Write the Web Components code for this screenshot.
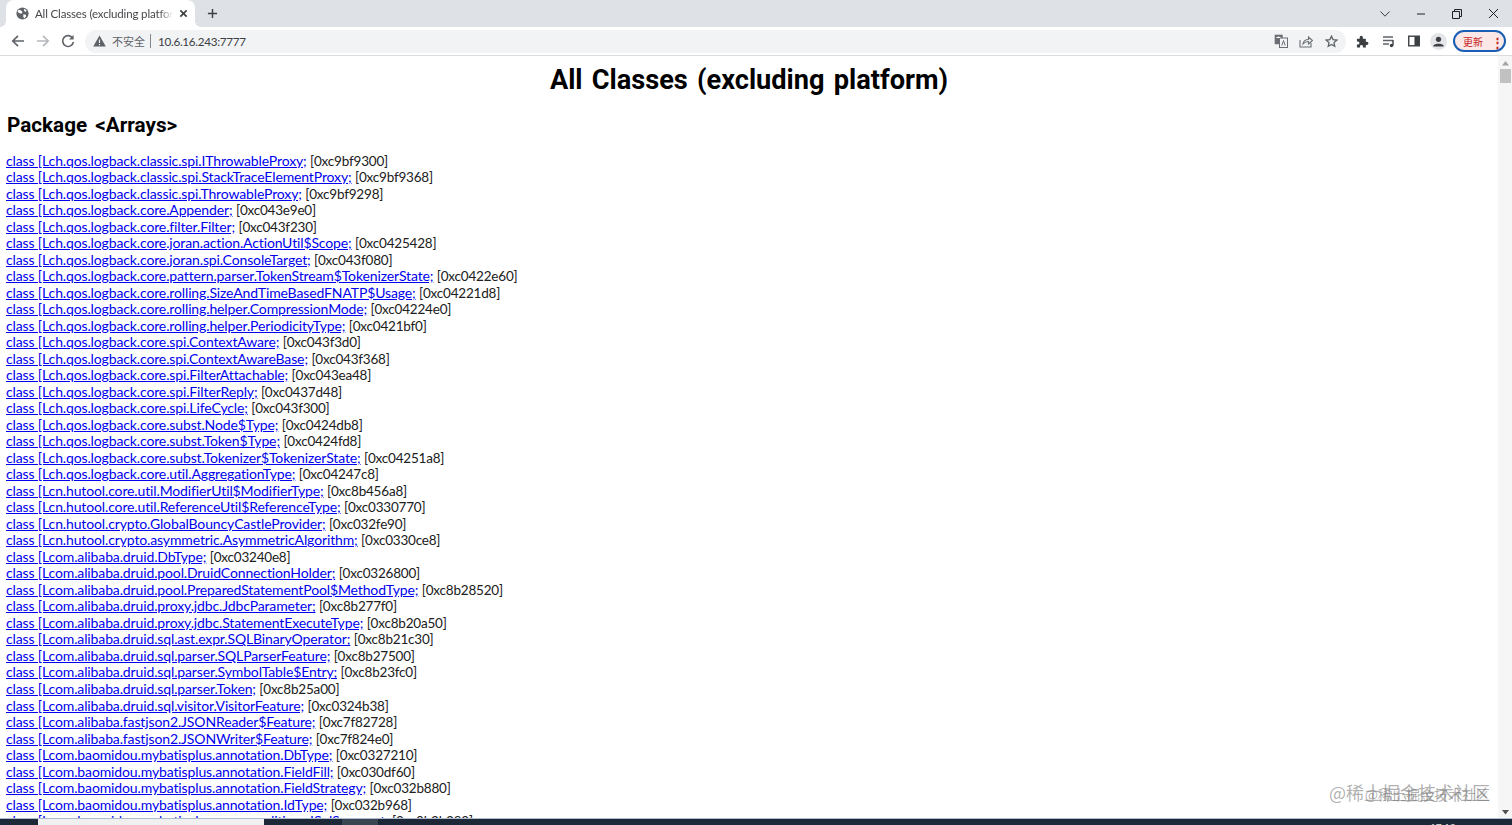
<!DOCTYPE html>
<html>
<head>
<meta charset="utf-8">
<style>
  html, body { margin: 0; height: 100%; overflow: hidden; }
  body { font-family: Lato, "Noto Sans CJK SC", sans-serif; }
</style>
</head>
<body>
<browser-window>
  <class-list title="All Classes (excluding platform)" package="Package <Arrays>"></class-list>
</browser-window>
<script>
const classes = [
  ["[Lch.qos.logback.classic.spi.IThrowableProxy;", "0xc9bf9300"],
  ["[Lch.qos.logback.classic.spi.StackTraceElementProxy;", "0xc9bf9368"],
  ["[Lch.qos.logback.classic.spi.ThrowableProxy;", "0xc9bf9298"],
  ["[Lch.qos.logback.core.Appender;", "0xc043e9e0"],
  ["[Lch.qos.logback.core.filter.Filter;", "0xc043f230"],
  ["[Lch.qos.logback.core.joran.action.ActionUtil$Scope;", "0xc0425428"],
  ["[Lch.qos.logback.core.joran.spi.ConsoleTarget;", "0xc043f080"],
  ["[Lch.qos.logback.core.pattern.parser.TokenStream$TokenizerState;", "0xc0422e60"],
  ["[Lch.qos.logback.core.rolling.SizeAndTimeBasedFNATP$Usage;", "0xc04221d8"],
  ["[Lch.qos.logback.core.rolling.helper.CompressionMode;", "0xc04224e0"],
  ["[Lch.qos.logback.core.rolling.helper.PeriodicityType;", "0xc0421bf0"],
  ["[Lch.qos.logback.core.spi.ContextAware;", "0xc043f3d0"],
  ["[Lch.qos.logback.core.spi.ContextAwareBase;", "0xc043f368"],
  ["[Lch.qos.logback.core.spi.FilterAttachable;", "0xc043ea48"],
  ["[Lch.qos.logback.core.spi.FilterReply;", "0xc0437d48"],
  ["[Lch.qos.logback.core.spi.LifeCycle;", "0xc043f300"],
  ["[Lch.qos.logback.core.subst.Node$Type;", "0xc0424db8"],
  ["[Lch.qos.logback.core.subst.Token$Type;", "0xc0424fd8"],
  ["[Lch.qos.logback.core.subst.Tokenizer$TokenizerState;", "0xc04251a8"],
  ["[Lch.qos.logback.core.util.AggregationType;", "0xc04247c8"],
  ["[Lcn.hutool.core.util.ModifierUtil$ModifierType;", "0xc8b456a8"],
  ["[Lcn.hutool.core.util.ReferenceUtil$ReferenceType;", "0xc0330770"],
  ["[Lcn.hutool.crypto.GlobalBouncyCastleProvider;", "0xc032fe90"],
  ["[Lcn.hutool.crypto.asymmetric.AsymmetricAlgorithm;", "0xc0330ce8"],
  ["[Lcom.alibaba.druid.DbType;", "0xc03240e8"],
  ["[Lcom.alibaba.druid.pool.DruidConnectionHolder;", "0xc0326800"],
  ["[Lcom.alibaba.druid.pool.PreparedStatementPool$MethodType;", "0xc8b28520"],
  ["[Lcom.alibaba.druid.proxy.jdbc.JdbcParameter;", "0xc8b277f0"],
  ["[Lcom.alibaba.druid.proxy.jdbc.StatementExecuteType;", "0xc8b20a50"],
  ["[Lcom.alibaba.druid.sql.ast.expr.SQLBinaryOperator;", "0xc8b21c30"],
  ["[Lcom.alibaba.druid.sql.parser.SQLParserFeature;", "0xc8b27500"],
  ["[Lcom.alibaba.druid.sql.parser.SymbolTable$Entry;", "0xc8b23fc0"],
  ["[Lcom.alibaba.druid.sql.parser.Token;", "0xc8b25a00"],
  ["[Lcom.alibaba.druid.sql.visitor.VisitorFeature;", "0xc0324b38"],
  ["[Lcom.alibaba.fastjson2.JSONReader$Feature;", "0xc7f82728"],
  ["[Lcom.alibaba.fastjson2.JSONWriter$Feature;", "0xc7f824e0"],
  ["[Lcom.baomidou.mybatisplus.annotation.DbType;", "0xc0327210"],
  ["[Lcom.baomidou.mybatisplus.annotation.FieldFill;", "0xc030df60"],
  ["[Lcom.baomidou.mybatisplus.annotation.FieldStrategy;", "0xc032b880"],
  ["[Lcom.baomidou.mybatisplus.annotation.IdType;", "0xc032b968"],
  ["[Lcom.baomidou.mybatisplus.core.conditions.ISqlSegment;", "0xc0b2b380"]
];

class BrowserWindow extends HTMLElement {
  connectedCallback() {
    const shadow = this.attachShadow({ mode: "open" });
    shadow.innerHTML = `
      <style>
        :host { display: flex; flex-direction: column; height: 825px; width: 1512px; position: relative; overflow: hidden; background: #fff; }
        .tabs { height: 27px; background: #dee1e6; display: flex; align-items: flex-end; padding-left: 6px; flex: none; }
        .tab { position: relative; width: 189px; height: 27px; background: #fff; border-radius: 8px 8px 0 0; display: flex; align-items: center; box-sizing: border-box; padding: 0 7px 0 9px; font: 11.5px Lato, "Noto Sans CJK SC", sans-serif; letter-spacing: -0.15px; color: #45474a; }
        .tab span { flex: 1; min-width: 0; overflow: hidden; white-space: nowrap; margin-left: 6px; -webkit-mask-image: linear-gradient(to right, #000 90%, transparent); mask-image: linear-gradient(to right, #000 90%, transparent); }
        .tab::before, .tab::after { content: ""; position: absolute; bottom: 0; width: 6px; height: 6px; background: radial-gradient(circle at 0 0, transparent 6px, #fff 6px); }
        .tab::before { left: -6px; }
        .tab::after { right: -6px; transform: scaleX(-1); }
        .new { margin: 0 0 0 12px; align-self: center; display: flex; }
        .win { margin-left: auto; display: flex; align-items: center; height: 27px; padding-right: 1px; }
        .win svg { display: block; }
        .win div { width: 36px; display: flex; justify-content: center; }
        .bar { height: 28px; display: flex; align-items: center; background: #fff; border-bottom: 1px solid #dadce0; flex: none; padding-left: 5px; }
        .nav { width: 25px; display: flex; justify-content: center; }
        .omni { margin-left: 5px; width: 1261px; height: 23px; box-sizing: border-box; background: #f1f3f4; border-radius: 12px; display: flex; align-items: center; padding: 0 8px; font: 11.7px Lato, "Noto Sans CJK SC", sans-serif; letter-spacing: -0.3px; color: #3c4043; }
        .omni .warn { color: #5f6368; font: 11px "Noto Sans CJK SC", sans-serif; letter-spacing: 0; }
        .omni .sep { width: 1px; height: 14px; background: #80868b; margin: 0 7px 0 5px; }
        .omni .spacer { flex: 1; }
        .omni svg, .bar svg { display: block; }
        .tools { display: flex; align-items: center; }
        .update { width: 53px; height: 22px; box-sizing: border-box; border: 2px solid #1a5fb4; border-radius: 12px; background: #fce8e6; margin-left: 6px; display: flex; align-items: center; padding-left: 8px; font: 10px "Noto Sans CJK SC", sans-serif; color: #c5221f; white-space: nowrap; }
        .update b { margin-left: 8px; font-size: 13px; line-height: 1; }
        .page { flex: 1; min-height: 0; display: flex; overflow: hidden; }
        .content { flex: 1; min-width: 0; overflow: hidden; }
        .scroll { width: 14px; background: #f6f6f6; flex: none; display: flex; flex-direction: column; align-items: center; }
        .thumb { width: 11px; height: 14px; background: #c1c1c1; margin-top: 3px; }
        .up { margin-top: 5px; }
        .down { margin-top: auto; margin-bottom: 3px; }
        .taskbar { height: 7px; box-sizing: border-box; border-top: 1px solid #aebccf; background: #1c2837; flex: none; display: flex; overflow: hidden; position: relative; }
        .taskbar i { display: block; }
        .clock { position: absolute; left: 1430px; top: 2px; font: 10px/12px Lato, sans-serif; color: #e8e8e8; }
        .watermark { position: absolute; right: 22px; top: 779px; font: 18px "Noto Sans CJK SC", sans-serif; color: rgba(110,110,110,.55); white-space: nowrap; }
        .watermark.two { top: 784px; font-size: 14px; }
      </style>
      <div class="tabs">
        <div class="tab">
          <svg width="13" height="13" viewBox="0 0 16 16" style="margin-left:1px;flex:none"><circle cx="8" cy="8" r="7.5" fill="#5f6368"/><path d="M3 3.5l3 .5 2 2-1 2-2 0-3-2zM9 9l3 .5.5 2-2.5 2.5-1-2zM10 2l3 2-1 2-2-1z" fill="#fff"/></svg>
          <span>All Classes (excluding platform)</span>
          <svg width="9" height="9" viewBox="0 0 10 10" style="margin-left:6px;flex:none"><path d="M1.5 1.5l7 7M8.5 1.5l-7 7" stroke="#3c4043" stroke-width="1.8"/></svg>
        </div>
        <div class="new"><svg width="11" height="11" viewBox="0 0 12 12"><path d="M6 1v10M1 6h10" stroke="#3c4043" stroke-width="1.6"/></svg></div>
        <div class="win">
          <div><svg width="10" height="6" viewBox="0 0 10 6"><path d="M.5.5L5 5.2 9.5.5" stroke="#3c4043" fill="none"/></svg></div>
          <div><svg width="10" height="2" viewBox="0 0 10 2"><path d="M1 1h8" stroke="#202124"/></svg></div>
          <div><svg width="10" height="10" viewBox="0 0 10 10"><path d="M.5 2.5h7v7h-7zM2.5 2.5v-2h7v7h-2" stroke="#202124" fill="none"/></svg></div>
          <div><svg width="11" height="11" viewBox="0 0 11 11"><path d="M1 1l9 9M10 1l-9 9" stroke="#202124"/></svg></div>
        </div>
      </div>
      <div class="bar">
        <div class="nav"><svg width="14" height="14" viewBox="0 0 14 14"><path d="M13 7H2M7 1.8L1.8 7 7 12.2" stroke="#5f6368" stroke-width="1.7" fill="none"/></svg></div>
        <div class="nav"><svg width="14" height="14" viewBox="0 0 14 14"><path d="M1 7h11M7 1.8L12.2 7 7 12.2" stroke="#b6b9bd" stroke-width="1.7" fill="none"/></svg></div>
        <div class="nav"><svg width="14" height="14" viewBox="0 0 14 14"><path d="M11.7 4.2A5.4 5.4 0 1 0 12.4 8" stroke="#5f6368" stroke-width="1.6" fill="none"/><path d="M12.6 1v4.6H8z" fill="#5f6368"/></svg></div>
        <div class="omni">
          <svg width="13" height="12" viewBox="0 0 13 12"><path d="M6.5.5L12.8 11.5H.2z" fill="#5f6368"/><path d="M6.5 4.5v3.5M6.5 9v1.2" stroke="#f1f3f4" stroke-width="1.1"/></svg>
          <span class="warn" style="margin-left:6px">不安全</span><span class="sep"></span><span>10.6.16.243:7777</span>
          <span class="spacer"></span>
          <svg width="14" height="14" viewBox="0 0 14 14" style="margin-right:11px"><rect x=".7" y=".7" width="8" height="9.5" fill="#6b6f74"/><rect x="5.5" y="4" width="8" height="9.5" fill="#f1f3f4" stroke="#6b6f74"/><path d="M7.8 11.5l1.7-5 1.7 5" stroke="#6b6f74" fill="none"/><path d="M2.5 3.5h4M4.5 2.5v1" stroke="#fff"/></svg>
          <svg width="14" height="14" viewBox="0 0 14 14" style="margin-right:12px"><path d="M1 6v7h11V9" stroke="#6b6f74" fill="none" stroke-width="1.1"/><path d="M4 10c.5-3 3-4.5 5.5-4.5V3l4 3.5-4 3.5V7.5C7.5 7.5 5.5 8.3 4 10z" stroke="#6b6f74" fill="none" stroke-width="1.1"/></svg>
          <svg width="13" height="13" viewBox="0 0 14 14"><path d="M7 1.3l1.7 3.7 4 .5-3 2.7.8 4L7 10.2l-3.5 2 .8-4-3-2.7 4-.5z" stroke="#5f6368" stroke-width="1.4" fill="none"/></svg>
        </div>
        <div class="tools">
          <svg style="margin-left:10px" width="13" height="13" viewBox="0 0 14 14"><path d="M1 4h3V2.5a1.7 1.7 0 0 1 3.4 0V4h3.2v3.2h1a1.8 1.8 0 0 1 0 3.6h-1V13.5H7.5v-1.2a1.6 1.6 0 0 0-3.2 0v1.2H1v-3.2h1a1.7 1.7 0 0 0 0-3.4H1z" fill="#3c4043"/></svg>
          <svg style="margin-left:13px" width="14" height="14" viewBox="0 0 14 14"><path d="M1 3h10M1 6.5h10M1 10h6" stroke="#5f6368" stroke-width="1.3"/><path d="M11 6v5.5" stroke="#3c4043" stroke-width="1.4"/><circle cx="9.5" cy="11.5" r="1.7" fill="#3c4043"/></svg>
          <svg style="margin-left:12px" width="12" height="12" viewBox="0 0 13 13"><rect x=".8" y="1.3" width="11.4" height="10.4" fill="none" stroke="#3c4043" stroke-width="1.5"/><rect x="7" y="1.3" width="5" height="10.4" fill="#3c4043"/></svg>
          <svg style="margin-left:10px" width="17" height="17" viewBox="0 0 17 17"><circle cx="8.5" cy="8.5" r="8.5" fill="#e3e5e8"/><circle cx="8.5" cy="6.3" r="2.6" fill="#3c4043"/><path d="M3.5 12.5c1-2.4 9-2.4 10 0v1h-10z" fill="#3c4043"/></svg>
          <div class="update">更新<b>⋮</b></div>
        </div>
      </div>
      <div class="page">
        <div class="content"><slot></slot></div>
        <div class="scroll">
          <svg class="up" width="7" height="5" viewBox="0 0 7 5"><path d="M3.5 0L7 4.5H0z" fill="#a3a3a3"/></svg>
          <div class="thumb"></div>
          <svg class="down" width="7" height="5" viewBox="0 0 7 5"><path d="M3.5 4.5L7 0H0z" fill="#505050"/></svg>
        </div>
      </div>
      <div class="taskbar">
        <i style="width:38px"></i><i style="width:226px;background:#f0f0f0"></i><i style="width:78px"></i><i style="width:36px;background:#3a4552"></i>
        <span class="clock">17:19</span>
      </div>
      <div class="watermark">@稀土掘金技术社区</div>
      <div class="watermark two">@稀土掘金技术社区</div>
    `;
  }
}

class ClassRow extends HTMLElement {
  connectedCallback() {
    const shadow = this.attachShadow({ mode: "open" });
    shadow.innerHTML = `
      <style>
        :host { display: block; white-space: nowrap; height: 16.53px; line-height: 16.53px; font-size: 14px; letter-spacing: -0.13px; color: #202020; }
        a { color: #0000ee; text-decoration: underline; }
        span { font-size: 13.5px; letter-spacing: -0.2px; }
      </style>
      <a href="#">class ${this.getAttribute("name")}</a> <span>[${this.getAttribute("addr")}]</span>
    `;
  }
}

class ClassList extends HTMLElement {
  connectedCallback() {
    const shadow = this.attachShadow({ mode: "open" });
    shadow.innerHTML = `
      <style>
        :host { display: block; padding: 0 6px; font-family: Roboto, sans-serif; }
        h1 { margin: 5.5px 0 0; height: 36px; line-height: 36px; text-align: center; font-size: 27.2px; font-weight: 700; word-spacing: 2.4px; color: #000; }
        h2 { margin: 12px 0 0; padding-left: 1px; height: 30px; line-height: 30px; font-size: 20.7px; font-weight: 700; word-spacing: 3px; color: #000; }
        .rows { margin-top: 13px; font-family: Lato, sans-serif; }
      </style>
      <h1></h1>
      <h2></h2>
      <div class="rows"></div>
    `;
    shadow.querySelector("h1").textContent = this.getAttribute("title");
    shadow.querySelector("h2").textContent = this.getAttribute("package");
    const rows = shadow.querySelector(".rows");
    classes.forEach(([name, addr]) => {
      const row = document.createElement("class-row");
      row.setAttribute("name", name);
      row.setAttribute("addr", addr);
      rows.appendChild(row);
    });
  }
}

customElements.define("browser-window", BrowserWindow);
customElements.define("class-row", ClassRow);
customElements.define("class-list", ClassList);
</script>
</body>
</html>
